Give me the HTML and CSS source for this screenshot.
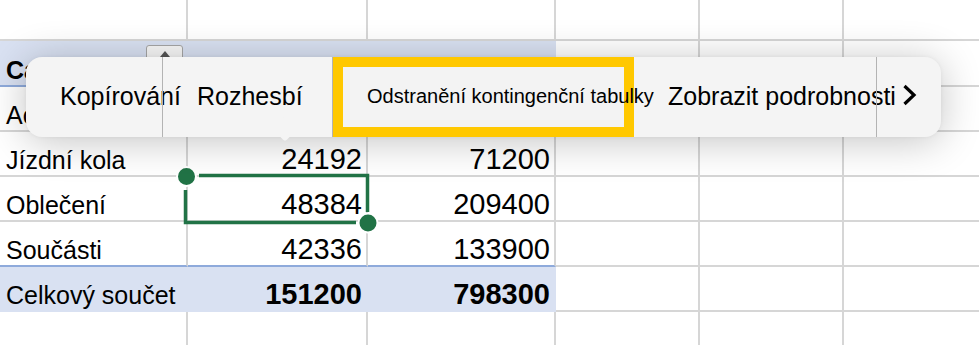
FILE: index.html
```html
<!DOCTYPE html>
<html lang="cs">
<head>
  <meta charset="UTF-8"/>
  <title>Kontingenční tabulka</title>
  <link rel="stylesheet" href="styles.css">
</head>
<body>
  <div class="sheet">
    <div class="row top">
      <div class="cell"></div><div class="cell"></div><div class="cell"></div>
      <div class="cell"></div><div class="cell"></div><div class="cell"></div>
    </div>
    <div class="row head">
      <div class="cell fill label bold">Category<span class="filter"><span class="arrow"></span></span></div>
      <div class="cell fill"></div>
      <div class="cell fill"></div>
      <div class="cell"></div><div class="cell"></div><div class="cell"></div>
    </div>
    <div class="row">
      <div class="cell label">Accessories</div>
      <div class="cell num"></div>
      <div class="cell num"></div>
      <div class="cell"></div><div class="cell"></div><div class="cell"></div>
    </div>
    <div class="row">
      <div class="cell label">Jízdní kola</div>
      <div class="cell num">24192</div>
      <div class="cell num">71200</div>
      <div class="cell"></div><div class="cell"></div><div class="cell"></div>
    </div>
    <div class="row">
      <div class="cell label">Oblečení</div>
      <div class="cell num">48384</div>
      <div class="cell num">209400</div>
      <div class="cell"></div><div class="cell"></div><div class="cell"></div>
    </div>
    <div class="row last">
      <div class="cell label">Součásti</div>
      <div class="cell num">42336</div>
      <div class="cell num">133900</div>
      <div class="cell"></div><div class="cell"></div><div class="cell"></div>
    </div>
    <div class="row total">
      <div class="cell fill label">Celkový součet</div>
      <div class="cell fill num bold">151200</div>
      <div class="cell fill num bold">798300</div>
      <div class="cell"></div><div class="cell"></div><div class="cell"></div>
    </div>
    <div class="row">
      <div class="cell"></div><div class="cell"></div><div class="cell"></div>
      <div class="cell"></div><div class="cell"></div><div class="cell"></div>
    </div>
  </div>

  <!-- selection frame over B4:B5 -->
  <svg class="selection" width="979" height="345" viewBox="0 0 979 345">
    <path d="M199 175.5 H367.5 V212" fill="none" stroke="#217346" stroke-width="3.5"/>
    <path d="M185.5 190 V222.5 H356" fill="none" stroke="#217346" stroke-width="3.5"/>
    <circle cx="186.5" cy="176.5" r="9.5" fill="#217346" stroke="#fff" stroke-width="2"/>
    <circle cx="368" cy="223" r="9.5" fill="#217346" stroke="#fff" stroke-width="2"/>
  </svg>

  <div class="popup">
    <div class="item copy">Kopírování</div>
    <div class="item expand">Rozhesbí</div>
    <div class="item remove">Odstranění kontingenční tabulky</div>
    <div class="item details"><span>Zobrazit podrobnosti</span><svg class="chev" width="15" height="22" viewBox="0 0 15 22"><path d="M2.5 2 L12 11 L2.5 20" fill="none" stroke="#000" stroke-width="3.2"/></svg></div>
    <div class="item more"></div>
  </div>
</body>
</html>
```

FILE: styles.css
```css
body { margin: 0; background: #fff; font-family: "Liberation Sans", Arial, sans-serif; color: #000; overflow: hidden; width: 979px; height: 345px; position: relative; }

.sheet { width: 979px; }
.row { display: grid; grid-template-columns: 188px 180px 188px 144px 144px 144px; height: 45px; }
.row.top { height: 41px; }
.row.head { height: 46px; }

.cell { box-sizing: border-box; border-right: 2px solid #d6d6d6; border-bottom: 2px solid #d6d6d6; display: flex; align-items: flex-end; padding: 0 6px; white-space: nowrap; overflow: hidden; }
.label { font-size: 25px; line-height: 30px; }
.num { font-size: 29px; line-height: 32px; justify-content: flex-end; padding: 0 4px; }
.bold { font-weight: bold; }

.fill { background: #d9e1f2; border-right-color: transparent; }
.row.head .fill { border-bottom-color: #8eaadb; overflow: visible; }
.row.last .cell:nth-child(-n+3) { border-bottom-color: #8eaadb; }
.row.total .fill { border-bottom-color: transparent; }

.filter { margin-left: auto; margin-right: -3px; align-self: flex-start; margin-top: 4px; width: 37px; height: 30px; box-sizing: border-box; border: 1px solid #a6a6a6; border-radius: 3px; background: #f7f7f7; display: flex; justify-content: center; }
.arrow { margin-top: 5px; width: 0; height: 0; border-left: 5px solid transparent; border-right: 5px solid transparent; border-bottom: 6px solid #555; }

.selection { position: absolute; left: 0; top: 0; pointer-events: none; }

.popup { position: absolute; left: 26px; top: 57px; width: 915px; height: 80px; display: flex; background: #f4f4f4; border-radius: 16px; box-shadow: 0 4px 40px rgba(0,0,0,0.24), 0 0 4px rgba(0,0,0,0.05); font-size: 25px; }
.popup::after { content: ""; position: absolute; left: 250px; top: 63px; width: 18px; height: 18px; background: #f4f4f4; transform: rotate(45deg); border-radius: 3px; }
.item { flex: none; box-sizing: border-box; height: 80px; display: flex; align-items: center; white-space: nowrap; position: relative; z-index: 1; }
.copy { width: 136px; padding-left: 34px; padding-bottom: 2px; }
.expand { width: 171px; padding-left: 34px; padding-bottom: 2px; border-left: 1px solid #b3b3b3; border-right: 1px solid #b3b3b3; }
.remove { width: 301px; padding-left: 24px; border: 10px solid #ffc800; font-size: 20px; background: #f3f3f3; padding-bottom: 2px; }
.details { width: 242px; padding-left: 34px; padding-bottom: 2px; }
.details span, .chev { flex: none; }
.chev { margin-left: 6px; margin-top: -3px; }
.more { width: 65px; border-left: 1px solid #b3b3b3; }
```
